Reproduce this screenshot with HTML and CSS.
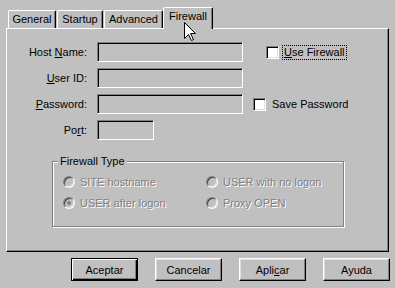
FILE: index.html
```html
<!DOCTYPE html>
<html>
<head>
<meta charset="utf-8">
<link rel="stylesheet" href="styles.css">
</head>
<body>
<div class="dialog">
  <div class="tabs">
    <div class="tab t-general">General</div>
    <div class="tab t-startup">Startup</div>
    <div class="tab t-advanced">Advanced</div>
    <div class="tab active">Firewall</div>
  </div>
  <div class="panel">
    <div class="form">
      <label class="lbl">Host <u>N</u>ame:</label>
      <input class="field" type="text" disabled>
      <div class="chk chk-use"><span class="box"></span><span class="focus"><u>U</u>se Firewall</span></div>

      <label class="lbl"><u>U</u>ser ID:</label>
      <input class="field" type="text" disabled>
      <div></div>

      <label class="lbl"><u>P</u>assword:</label>
      <input class="field" type="text" disabled>
      <div class="chk chk-save"><span class="box"></span><span>Save Password</span></div>

      <label class="lbl">Po<u>r</u>t:</label>
      <input class="field port" type="text" disabled>
      <div></div>
    </div>
    <fieldset class="group">
      <legend>Firewall Type</legend>
      <div class="radios">
        <div class="radio"><span class="dot"></span><span class="dis">SITE hostname</span></div>
        <div class="radio"><span class="dot"></span><span class="dis">USER with no logon</span></div>
        <div class="radio"><span class="dot on"></span><span class="dis">USER after logon</span></div>
        <div class="radio"><span class="dot"></span><span class="dis">Proxy OPEN</span></div>
      </div>
    </fieldset>
  </div>
  <div class="buttons">
    <button class="btn default">Aceptar</button>
    <button class="btn">Cancelar</button>
    <button class="btn">Apli<u>c</u>ar</button>
    <button class="btn">Ayuda</button>
  </div>
  <svg class="cursor" width="13" height="20" viewBox="0 0 13 20">
    <path d="M0.5 0.5 L0.5 16.5 L4.5 12.5 L7.5 18.5 L9.5 17.5 L6.5 11.5 L11.5 11.5 Z" fill="#fff" stroke="#000" stroke-width="1"/>
  </svg>
</div>
</body>
</html>
```

FILE: styles.css
```css
html, body {
  margin: 0;
  padding: 0;
  background: #c0c0c0;
}
body {
  font-family: "Liberation Sans", Arial, sans-serif;
  font-size: 11px;
  color: #000;
  width: 395px;
  height: 288px;
  overflow: hidden;
}
.dialog {
  position: relative;
  width: 395px;
  height: 288px;
}
.tabs {
  display: flex;
  align-items: flex-end;
  padding-left: 8px;
  padding-top: 8px;
  height: 21px;
  margin-bottom: -1px;
}
.tab {
  box-sizing: border-box;
  height: 18px;
  margin-bottom: 1px;
  background: #c0c0c0;
  border-top: 1px solid #fff;
  border-left: 1px solid #fff;
  border-right: 1px solid #000;
  border-radius: 2px 2px 0 0;
  box-shadow: inset -1px 0 0 #808080;
  display: flex;
  align-items: center;
  justify-content: center;
  line-height: 13px;
}
.t-general { width: 48px; margin-right: 1px; }
.t-startup { width: 46px; margin-right: 1px; }
.t-advanced { width: 59px; margin-right: 0; }
.tab.active {
  position: relative;
  z-index: 1;
  width: 50px;
  height: 22px;
  margin-bottom: 0;
  padding-bottom: 5px;
  box-sizing: border-box;
}
.panel {
  box-sizing: border-box;
  margin-left: 6px;
  width: 383px;
  height: 224px;
  border-top: 1px solid #fff;
  border-left: 1px solid #fff;
  border-right: 1px solid #000;
  border-bottom: 1px solid #000;
  box-shadow: inset -1px -1px 0 #808080;
  padding-top: 13px;
}
.form {
  display: grid;
  grid-template-columns: 80px 146px 1fr;
  grid-auto-rows: 20px;
  column-gap: 10px;
  row-gap: 6px;
}
.lbl {
  display: block;
  text-align: right;
  line-height: 20px;
  white-space: nowrap;
}
.field {
  box-sizing: border-box;
  width: 146px;
  height: 20px;
  margin: 0;
  padding: 0;
  background: #c0c0c0;
  border: 1px solid;
  border-color: #808080 #fff #fff #808080;
  box-shadow: inset 1px 1px 0 #000;
  outline: none;
}
.field.port { width: 57px; }
.chk {
  display: flex;
  align-items: center;
}
.chk-use { padding-left: 13px; gap: 4px; }
.chk-save { gap: 6px; }
.box {
  box-sizing: border-box;
  width: 13px;
  height: 13px;
  background: #fff;
  border: 1px solid;
  border-color: #808080 #fff #fff #808080;
  box-shadow: inset 1px 1px 0 #000, inset -1px -1px 0 #dfdfdf;
}
.focus {
  outline: 1px dotted #000;
  padding: 0 1px;
  line-height: 13px;
}
.group {
  box-sizing: border-box;
  margin: 15px 0 0 45px;
  width: 292px;
  height: 72px;
  padding: 6px 0 0 10px;
  border: 1px solid #808080;
  box-shadow: inset 1px 1px 0 #fff, 1px 1px 0 #fff;
  min-width: 0;
}
.group legend {
  padding: 0 2px;
  margin-left: -5px;
  line-height: 13px;
  background: #c0c0c0;
}
.radios {
  display: grid;
  grid-template-columns: 143px 1fr;
  grid-auto-rows: 16px;
  row-gap: 5px;
}
.radio {
  display: flex;
  align-items: center;
  gap: 5px;
}
.dot {
  box-sizing: border-box;
  width: 12px;
  height: 12px;
  border-radius: 50%;
  background: #c0c0c0;
  border: 1px solid;
  border-color: #808080 #fff #fff #808080;
  box-shadow: inset 1px 1px 0 #404040, inset -1px -1px 0 #dfdfdf;
  display: flex;
  align-items: center;
  justify-content: center;
}
.dot.on::after {
  content: "";
  width: 4px;
  height: 4px;
  border-radius: 50%;
  background: #808080;
}
.dis {
  color: #808080;
  text-shadow: 1px 1px 0 #fff;
}
.buttons {
  display: flex;
  justify-content: flex-end;
  gap: 17px;
  padding-right: 5px;
  margin-top: 6px;
}
.btn {
  box-sizing: border-box;
  width: 67px;
  height: 23px;
  margin: 0;
  padding: 0;
  font-family: "Liberation Sans", Arial, sans-serif;
  font-size: 11px;
  color: #000;
  background: #c0c0c0;
  border: 1px solid;
  border-color: #fff #000 #000 #fff;
  box-shadow: inset -1px -1px 0 #808080, inset 1px 1px 0 #dfdfdf;
}
.btn.default {
  border: 1px solid #000;
  box-shadow: inset 1px 1px 0 #fff, inset -1px -1px 0 #000, inset -2px -2px 0 #808080;
}
.cursor {
  position: absolute;
  left: 184px;
  top: 22px;
  z-index: 5;
}
```
